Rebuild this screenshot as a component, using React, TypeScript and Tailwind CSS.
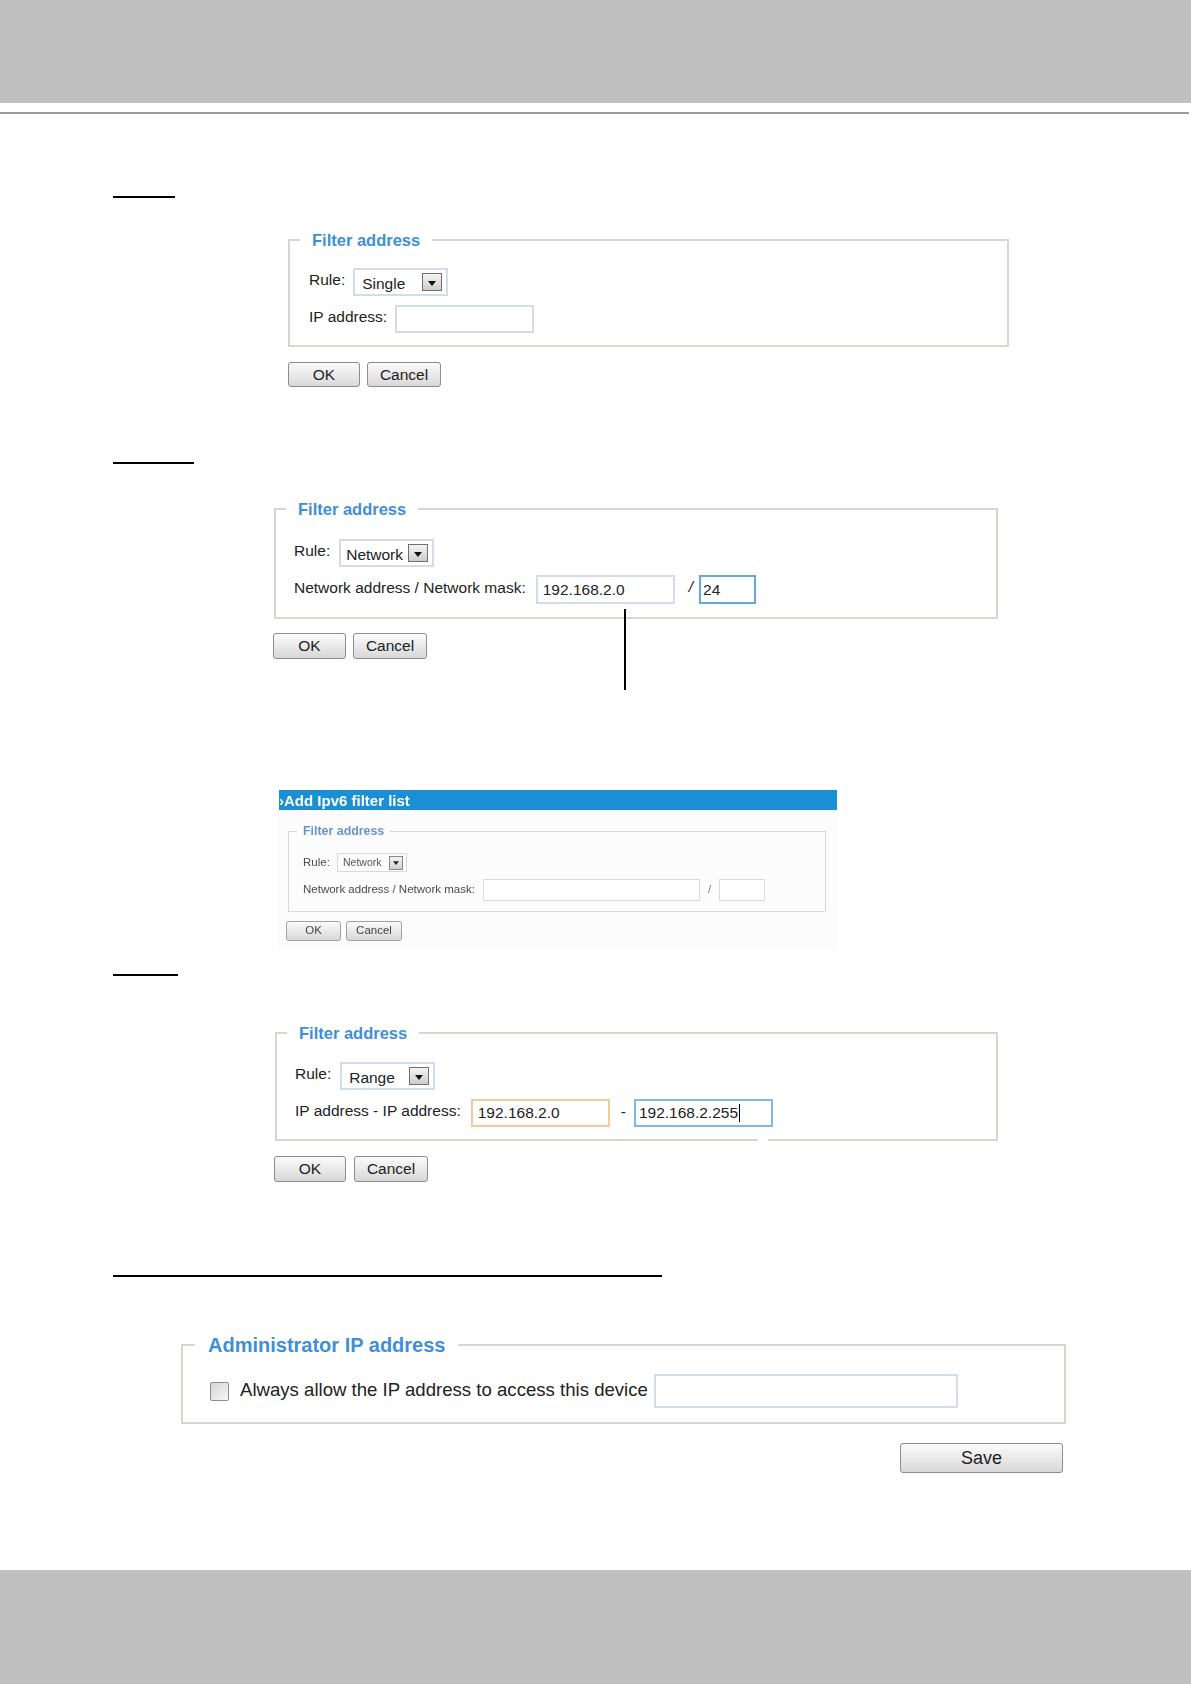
import React from 'react';

function Btn({ children, className }: { children: React.ReactNode; className: string }) {
  return (
    <button
      className={`flex items-center justify-center rounded-[3px] border border-[#8c8c8c] bg-linear-to-b from-[#fbfbfb] to-[#d8d8d8] text-[#1e1e1e] ${className}`}
    >
      {children}
    </button>
  );
}

function Arrow({ className }: { className: string }) {
  return (
    <span
      className={`flex items-center justify-center border border-[#6f6f6f] bg-linear-to-b from-[#f4f4f4] to-[#cdcdcd] ${className}`}
    >
      <svg width="8" height="5" viewBox="0 0 8 5" className="mt-[3px]">
        <path d="M0 0h8L4 5z" fill="#111" />
      </svg>
    </span>
  );
}

function Select({ value, wide }: { value: string; wide?: boolean }) {
  return (
    <div className="flex h-[28px] w-[95px] items-center justify-between border-2 border-[#d2dcea] bg-white pl-[7px] pr-[4px]">
      <span className={`translate-y-[2px] text-[15.5px] leading-none text-[#222] ${wide ? '-ml-[2px]' : ''}`}>{value}</span>
      <Arrow className="h-[18px] w-[20px]" />
    </div>
  );
}

function Legend({ children }: { children: React.ReactNode }) {
  return (
    <legend className="ml-[10px] px-[12px] text-[16.5px] font-bold leading-[20px] text-[#3f8fd8]">
      {children}
    </legend>
  );
}

function Ipv6Shot() {
  return (
    <div className="ml-[278px] mt-[131px] h-[160px] w-[559px] bg-[#fcfcfc] blur-[0.35px]">
      <div className="ml-[1px] mt-[1px] flex h-[20px] w-[558px] items-center bg-[#1b8fd3] text-[15px] font-bold leading-none text-white">
        ›Add Ipv6 filter list
      </div>
      <fieldset className="ml-[10px] mt-[13px] w-[538px] border border-[#d9d9d4]">
        <legend className="ml-[8px] px-[6px] text-[12.4px] font-bold leading-[16px] text-[#6a93c9]">Filter address</legend>
        <div className="flex flex-col gap-[7px] pb-[10px] pl-[14px] pt-[14px] text-[11.5px] text-[#4a4a4a]">
          <div className="flex h-[19px] items-center">
            <span className="w-[34px]">Rule:</span>
            <div className="flex h-[19px] w-[70px] items-center justify-between border border-[#d6dbe2] pl-[5px] pr-[3px]">
              <span className="text-[10.5px] text-[#555]">Network</span>
              <span className="flex h-[14px] w-[14px] items-center justify-center border border-[#888] bg-linear-to-b from-[#f2f2f2] to-[#d2d2d2]">
                <svg width="6" height="4" viewBox="0 0 8 5">
                  <path d="M0 0h8L4 5z" fill="#222" />
                </svg>
              </span>
            </div>
          </div>
          <div className="flex h-[22px] items-center">
            <span className="w-[180px]">Network address / Network mask:</span>
            <div className="h-[22px] w-[217px] border border-[#d6dbe2] bg-white" />
            <span className="ml-[8px] mr-[8px] text-[#777]">/</span>
            <div className="h-[22px] w-[46px] border border-[#d6dbe2] bg-white" />
          </div>
        </div>
      </fieldset>
      <div className="ml-[8px] mt-[9px] flex gap-[5px] text-[11.5px]">
        <Btn className="h-[20px] w-[55px] border-[#a0a0a0] text-[#444]">OK</Btn>
        <Btn className="h-[20px] w-[56px] border-[#a0a0a0] text-[#444]">Cancel</Btn>
      </div>
    </div>
  );
}

export default function App() {
  return (
    <div className="relative h-[1684px] w-[1191px] overflow-hidden bg-white font-['Liberation_Sans',Arial,sans-serif] text-[#222]">
      {/* page header band */}
      <div className="h-[103px] bg-[#bfc0bf]" />
      <div className="mt-[9px] h-[2px] w-[1189px] bg-[#9c9c9c]" />

      {/* Single */}
      <div className="ml-[113px] mt-[82px] h-[2px] w-[62px] bg-black" />
      <fieldset className="ml-[288px] mt-[32px] w-[721px] border-2 border-[#d7d6cf]">
        <Legend>Filter address</Legend>
        <div className="flex flex-col gap-[9px] pb-[12px] pl-[19px] pt-[18px] text-[15.5px]">
          <div className="flex items-center">
            <span className="mr-[8px] -translate-y-[2px]">Rule:</span>
            <Select value="Single" />
          </div>
          <div className="flex items-center">
            <span className="mr-[8px] -translate-y-[2px]">IP address:</span>
            <div className="h-[28px] w-[139px] border-2 border-[#d2dcea] bg-white" />
          </div>
        </div>
      </fieldset>
      <div className="ml-[288px] mt-[15px] flex gap-[7px] text-[15.5px]">
        <Btn className="h-[25px] w-[72px]">OK</Btn>
        <Btn className="h-[25px] w-[74px]">Cancel</Btn>
      </div>

      {/* Network */}
      <div className="ml-[113px] mt-[75px] h-[2px] w-[81px] bg-black" />
      <fieldset className="ml-[274px] mt-[35px] w-[724px] border-2 border-[#d7d6cf]">
        <Legend>Filter address</Legend>
        <div className="flex flex-col gap-[8px] pb-[13px] pl-[18px] pt-[20px] text-[15.5px]">
          <div className="flex items-center">
            <span className="mr-[9px] -translate-y-[2px]">Rule:</span>
            <Select value="Network" wide />
          </div>
          <div className="flex h-[29px] items-center">
            <span className="mr-[10px] -translate-y-[2px]">Network address / Network mask:</span>
            <div className="flex h-[29px] w-[139px] items-center border-2 border-[#d2dcea] bg-white pl-[5px]">192.168.2.0</div>
            <span className="ml-[14px] mr-[6px] -translate-y-[3px] italic">/</span>
            <div className="flex h-[29px] w-[57px] items-center border-2 border-[#62a9de] bg-white pl-[2px]">24</div>
          </div>
        </div>
      </fieldset>
      <div className="ml-[273px] mt-[14px] flex gap-[7px] text-[15.5px]">
        <Btn className="h-[26px] w-[73px]">OK</Btn>
        <Btn className="h-[26px] w-[74px]">Cancel</Btn>
      </div>
      {/* callout line */}
      <div className="absolute left-[624px] top-[609px] h-[81px] w-[1.5px] bg-black" />

      <Ipv6Shot />

      {/* Range */}
      <div className="ml-[113px] mt-[24px] h-[2px] w-[65px] bg-black" />
      <fieldset className="relative ml-[275px] mt-[47px] w-[723px] border-2 border-[#d7d6cf]">
        <Legend>Filter address</Legend>
        <div className="flex flex-col gap-[9px] pb-[12px] pl-[18px] pt-[19px] text-[15.5px]">
          <div className="flex items-center">
            <span className="mr-[9px] -translate-y-[2px]">Rule:</span>
            <Select value="Range" />
          </div>
          <div className="flex h-[28px] items-center">
            <span className="mr-[10px] -translate-y-[2px]">IP address - IP address:</span>
            <div className="flex h-[28px] w-[139px] items-center border-2 border-[#f6c99c] bg-white pl-[5px]">192.168.2.0</div>
            <span className="ml-[11px] mr-[8px] -translate-y-[1px]">-</span>
            <div className="flex h-[28px] w-[139px] items-center border-2 border-[#7bbbe4] bg-white pl-[3px]">
              192.168.2.255
              <span className="ml-[1px] h-[18px] w-px bg-black" />
            </div>
          </div>
        </div>
        <div className="absolute -bottom-[3px] left-[481px] h-[4px] w-[10px] bg-white" />
      </fieldset>
      <div className="ml-[274px] mt-[15px] flex gap-[8px] text-[15.5px]">
        <Btn className="h-[26px] w-[72px]">OK</Btn>
        <Btn className="h-[26px] w-[74px]">Cancel</Btn>
      </div>

      {/* Administrator IP address */}
      <div className="ml-[113px] mt-[93px] h-[2px] w-[549px] bg-black" />
      <fieldset className="ml-[181px] mt-[56px] w-[885px] border-2 border-[#d7d6cf]">
        <legend className="ml-[12px] px-[13px] text-[20px] font-bold leading-[24px] text-[#3f8fd8]">
          Administrator IP address
        </legend>
        <div className="mb-[14px] mt-[17px] flex h-[34px] items-center pl-[27px] text-[18.6px]">
          <span className="mr-[11px] h-[19px] w-[19px] rounded-[2px] border border-[#8d8d8d] bg-linear-to-br from-[#d6d6d6] to-[#f7f7f7]" />
          <span className="mr-[6px] -translate-y-[1px]">Always allow the IP address to access this device</span>
          <div className="h-[34px] w-[304px] border-2 border-[#d2dcea] bg-white" />
        </div>
      </fieldset>
      <div className="ml-[900px] mt-[19px]">
        <Btn className="h-[30px] w-[163px] text-[18px]">Save</Btn>
      </div>

      {/* footer band */}
      <div className="mt-[97px] h-[114px] bg-[#bfc0bf]" />
    </div>
  );
}
